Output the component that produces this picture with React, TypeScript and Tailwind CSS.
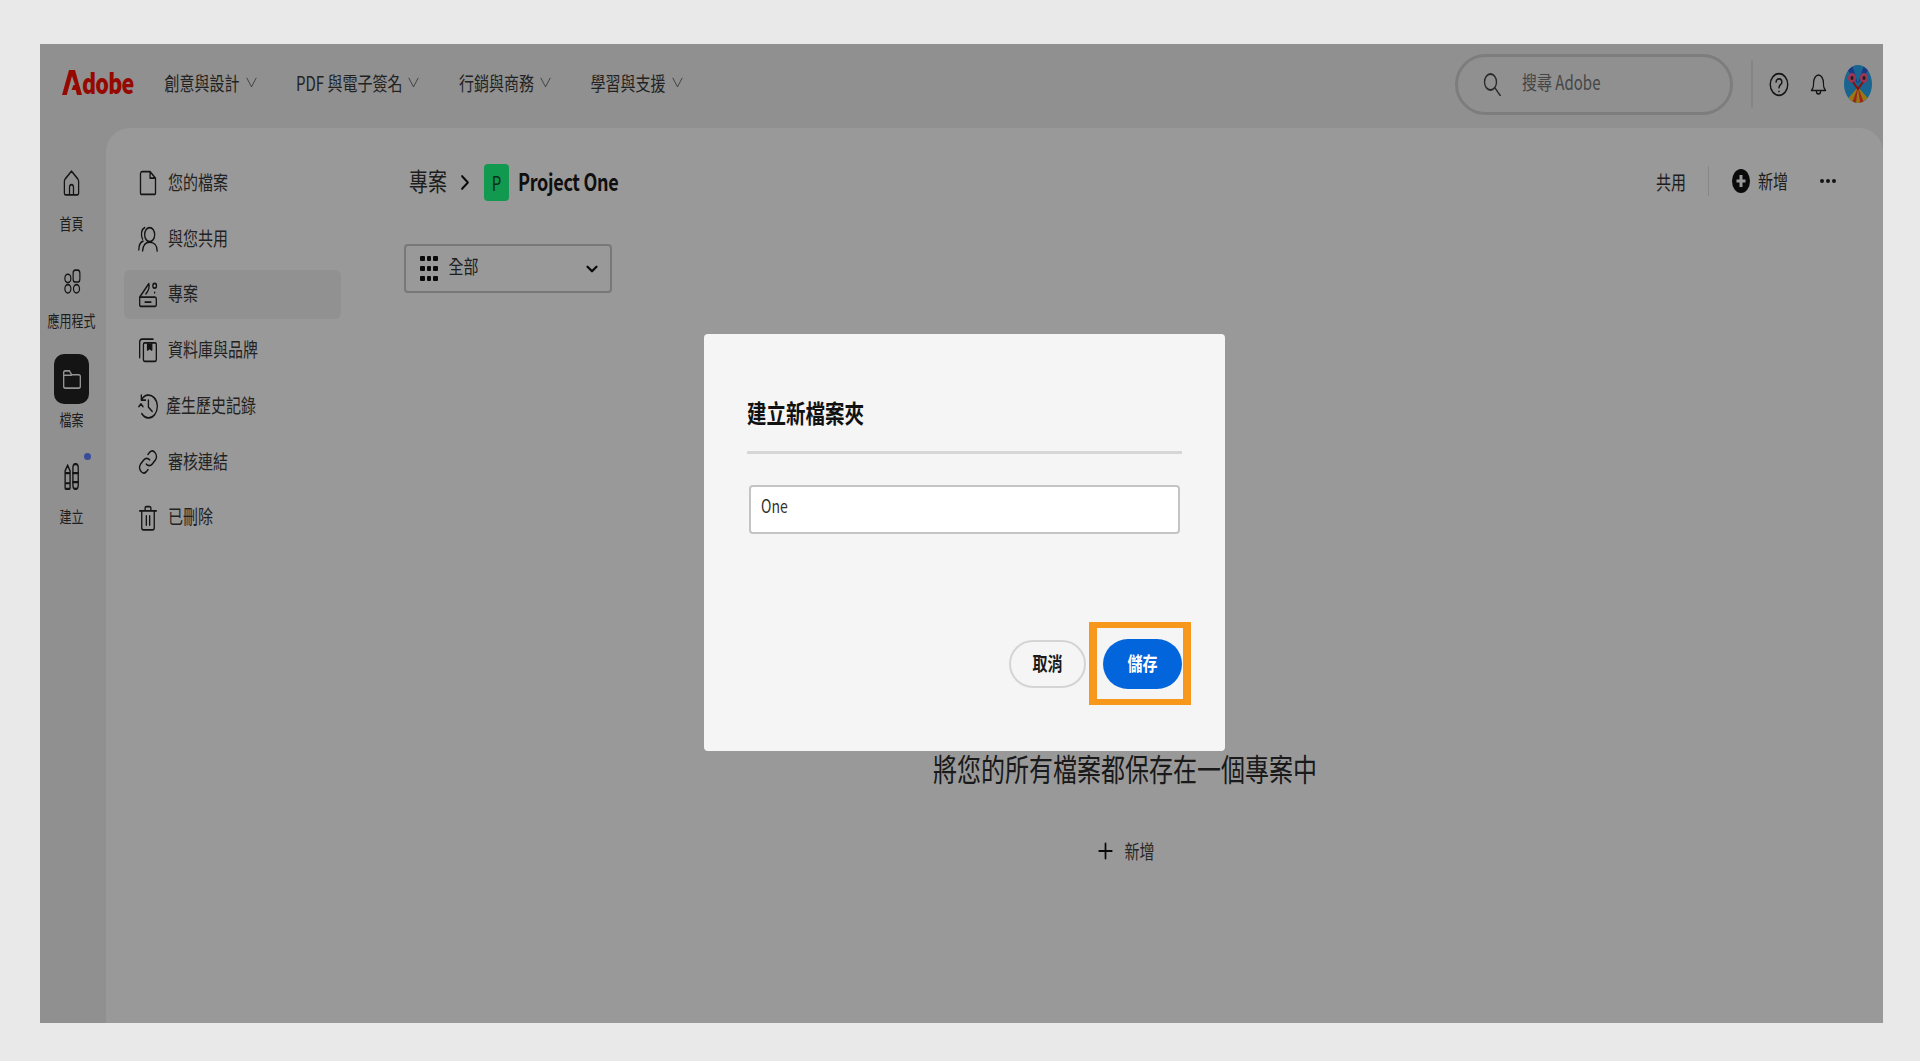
import { ChevronDown } from "lucide-react";
import type { ReactNode } from "react";

// the whole shot is stretched vertically, text and icons need the same stretch
function T({ children }: { children: ReactNode }) {
  return <span className="inline-block whitespace-nowrap leading-none scale-y-[1.3]">{children}</span>;
}

function Ico({ w, h, sw = 1.6, children }: { w: number; h: number; sw?: number; children: ReactNode }) {
  return (
    <svg
      width={w}
      height={h}
      viewBox="0 0 24 24"
      preserveAspectRatio="none"
      fill="none"
      stroke="currentColor"
      strokeWidth={sw}
      strokeLinecap="round"
      strokeLinejoin="round"
      className="shrink-0"
    >
      {children}
    </svg>
  );
}

const sideItems = [
  {
    label: "您的檔案",
    icon: <path d="M3 3.500A2 2 0 0 1 5 1.500h9.500L21 7.500V21.500a1 1 0 0 1-1 1H4a1 1 0 0 1-1-1z M14.500 1.500v6h6.500" />,
  },
  {
    label: "與您共用",
    icon: (
      <>
        <ellipse cx="14" cy="8" rx="6" ry="6.500" />
        <path d="M8 1.500C4 3 3 8 5.500 12 M1 22c0-4 2-7 5-8 M23 23c0-5-3.500-8-9-8s-8 3-8.500 8" />
      </>
    ),
  },
  {
    label: "專案",
    active: true,
    icon: (
      <>
        <path d="M2 14L13 1.500c1 3-1 7-3.500 9.500 M2 14h18a2 2 0 0 1 2 1.500V21a1.500 1.500 0 0 1-1.500 1.500H4A1.500 1.500 0 0 1 2 21z M8.500 18.500h7" />
        <circle cx="20" cy="3.500" r="2.200" />
        <path d="M20 9.500v.5" />
      </>
    ),
  },
  {
    label: "資料庫與品牌",
    icon: (
      <>
        <path d="M2 19V5a3 3 0 0 1 3-3h13" />
        <rect x="6.500" y="5.500" width="15.500" height="17" rx="1.500" />
        <path d="M11.500 6v6l2.500-1.500L16.500 12V6" fill="currentColor" />
      </>
    ),
  },
  {
    label: "產生歷史記錄",
    tight: true,
    icon: (
      <path d="M4 6.500A10.500 10.500 0 1 1 4.500 19 M4 2v4.500h5 M12.500 6.500v6.500l4.500 4 M1 12.500l2.500-2.500 2.500 2.500" />
    ),
  },
  {
    label: "審核連結",
    icon: (
      <path d="M10 14a5 5 0 0 0 7 0l4-4a5 5 0 0 0-7-7l-2 2 M14 10a5 5 0 0 0-7 0l-4 4a5 5 0 0 0 7 7l2-2" />
    ),
  },
  {
    label: "已刪除",
    icon: (
      <path d="M2 5.500h20 M8.500 5.500V3a1.500 1.500 0 0 1 1.500-1.500h4A1.500 1.500 0 0 1 15.500 3v2.500 M4.500 5.500V21a2 2 0 0 0 2 2h11a2 2 0 0 0 2-2V5.500 M10 10v8.500 M14 10v8.500" />
    ),
  },
];

const navItems = ["創意與設計", "PDF 與電子簽名", "行銷與商務", "學習與支援"];

function NavChevron() {
  return (
    <Ico w={11} h={13} sw={1.4}>
      <path d="M2 4l10 16L22 4" />
    </Ico>
  );
}

function Header() {
  return (
    <header className="flex h-[80px] items-center pl-[22px] pr-[11px] text-[15px] text-[#3a3a3a]">
      <div className="-mt-[3px] flex w-[71px] items-center text-[#fa0f00]">
        <svg width="20" height="25" viewBox="0 0 20 25" className="shrink-0">
          <path d="M7 0h6l7 25h-5l-1.300-5H9.500l2-5h1.600L10 6 4.800 25H0z" fill="currentColor" />
        </svg>
        <span className="text-[21.500px] font-black tracking-[-0.8px]">
          <T>dobe</T>
        </span>
      </div>
      <nav className="-mt-[3px] ml-[31.500px] flex items-center gap-[39.500px]">
        {navItems.map((item) => (
          <div key={item} className="flex items-center gap-[6px]">
            <T>{item}</T>
            <NavChevron />
          </div>
        ))}
      </nav>
      <div className="ml-auto flex h-[61px] w-[278px] items-center rounded-full border-[3px] border-[#d0d0d0] pl-[25px] text-[#757575]">
        <span className="text-[#444]">
          <Ico w={18} h={24} sw={1.8}>
            <circle cx="10" cy="10" r="8" />
            <path d="M16 16l7 7.500" />
          </Ico>
        </span>
        <span className="-mt-[4px] ml-[21px] text-[15px]">
          <T>搜尋 Adobe</T>
        </span>
      </div>
      <div className="ml-[18px] h-[48px] w-[2px] bg-[#dedede]" />
      <div className="ml-[16px] text-[#222]">
        <Ico w={20} h={25} sw={1.7}>
          <circle cx="12" cy="12" r="10.500" />
          <path d="M8.500 9.500a3.500 3 0 1 1 5.500 2.500c-1.200.8-2 1.400-2 3 M12 18.500v.2" />
        </Ico>
      </div>
      <div className="ml-[21px] text-[#222]">
        <Ico w={17} h={24} sw={1.7}>
          <path d="M2 18.500c2-2 3-3 3-7.500a7 8 0 0 1 14 0c0 4.500 1 5.500 3 7.500z M9 19a3 3 0 0 0 6 0" />
        </Ico>
      </div>
      <svg width="28" height="38" viewBox="0 0 28 38" className="ml-[17px] shrink-0">
        <defs>
          <clipPath id="av">
            <ellipse cx="14" cy="19" rx="14" ry="19" />
          </clipPath>
        </defs>
        <g clipPath="url(#av)">
          <rect width="28" height="38" fill="#27a8f0" />
          <path d="M14 19L0 0h8zM14 19L28 0h-8z" fill="#2a5fe0" />
          <path d="M14 22L0 38h28z" fill="#ffc81f" />
          <path d="M14 22L8 38h4zM14 22l6 16h-4z" fill="#ff4238" />
          <ellipse cx="8" cy="13" rx="4" ry="5" fill="#ff5a8a" />
          <ellipse cx="20" cy="13" rx="4" ry="5" fill="#ff5a8a" />
          <ellipse cx="8" cy="13" rx="1.500" ry="2" fill="#333" />
          <ellipse cx="20" cy="13" rx="1.500" ry="2" fill="#333" />
          <path d="M9 17l5 7 5-7" stroke="#e0201c" strokeWidth="2" fill="none" />
        </g>
      </svg>
    </header>
  );
}

function Rail() {
  return (
    <aside className="flex w-[66px] shrink-0 flex-col items-center pr-[3px] pt-[42px] text-[12px] text-[#333]">
      <div className="text-[#222]">
        <Ico w={19} h={26}>
          <path d="M4.500 23h15a1.500 1.500 0 0 0 1.500-1.500V10.500c0-1-.4-1.600-1-2.200L12 1 4 8.300c-.6.600-1 1.200-1 2.200v11A1.500 1.500 0 0 0 4.500 23z M9.500 23v-7a2.500 2.500 0 0 1 5 0v7" />
        </Ico>
      </div>
      <div className="mt-[19px] h-4">
        <T>首頁</T>
      </div>
      <div className="mt-[38px] text-[#222]">
        <Ico w={18} h={25}>
          <circle cx="6.500" cy="9" r="4" />
          <rect x="13.500" y="1" width="9" height="11.500" rx="3" />
          <circle cx="6.500" cy="19" r="4" />
          <circle cx="18" cy="19" r="4" />
        </Ico>
      </div>
      <div className="mt-[17px] h-4">
        <T>應用程式</T>
      </div>
      <div className="mt-[27px] flex h-[50px] w-[35px] items-center justify-center rounded-[10px] bg-[#222] text-[#f5f5f5]">
        <Ico w={20} h={23}>
          <path d="M2 5a2 2 0 0 1 2-2h5l2.500 4H20a2 2 0 0 1 2 2v10a2 2 0 0 1-2 2H4a2 2 0 0 1-2-2z M2 7.500h9.500" />
        </Ico>
      </div>
      <div className="mt-[6px] h-4">
        <T>檔案</T>
      </div>
      <div className="relative mt-[37px] text-[#222]">
        <Ico w={17} h={27} sw={1.9}>
          <path d="M3 7l3.500-5L10 7v15a1 1 0 0 1-1 1H4a1 1 0 0 1-1-1z M3 9h7 M3 18h7" />
          <rect x="14" y="1" width="7.500" height="22" rx="3" />
          <path d="M14 9h7.500 M14 17h7.500" />
        </Ico>
        <span className="absolute -right-[11px] -top-[10px] size-[7px] rounded-full bg-[#5d80ff]" />
      </div>
      <div className="mt-[17px] h-4">
        <T>建立</T>
      </div>
    </aside>
  );
}

function Sidebar() {
  return (
    <div className="flex w-[257px] shrink-0 flex-col gap-[6.75px] pl-[18px] pr-[22px] pt-[30.5px] text-[15px] text-[#3a3a3a]">
      {sideItems.map((item) => (
        <div
          key={item.label}
          className={`flex h-[49px] items-center rounded-[6px] pl-[14px] ${item.active ? "bg-[#f2f2f2]" : ""}`}
        >
          <div className="text-[#222]">
            <Ico w={20} h={26} sw={1.6}>
              {item.icon}
            </Ico>
          </div>
          <span className={`-mt-[2px] ${item.tight ? "ml-[8px]" : "ml-[10px]"}`}>
            <T>{item.label}</T>
          </span>
        </div>
      ))}
    </div>
  );
}

function Main() {
  return (
    <main className="flex min-w-0 flex-1 flex-col pl-[41px] pr-[47px] pt-[36px]">
      <div className="flex h-[37px] items-center">
        <span className="-mt-[5px] ml-[5px] text-[19px] text-[#333]">
          <T>專案</T>
        </span>
        <div className="ml-[13px] text-[#111]">
          <Ico w={10} h={15} sw={4}>
            <path d="M5 2l14 10L5 22" />
          </Ico>
        </div>
        <div className="ml-[14px] flex h-[37px] w-[25px] items-center justify-center rounded-[4px] bg-[#1bff84] text-[15px] text-[#0b4f29]">
          <T>P</T>
        </div>
        <span className="-mt-[3px] ml-[9px] text-[18px] font-semibold tracking-[-0.3px] text-[#1a1a1a]">
          <T>Project One</T>
        </span>
        <div className="-mt-[3px] ml-auto flex items-center text-[15px] text-[#333]">
          <T>共用</T>
          <div className="ml-[22px] h-[30px] w-[1px] bg-[#e2e2e2]" />
          <svg width="18" height="24" viewBox="0 0 18 24" className="ml-[23px]" preserveAspectRatio="none">
            <ellipse cx="9" cy="12" rx="9" ry="12" fill="#111" />
            <path d="M9 6v12M4.500 12h9" stroke="#fff" strokeWidth="3" />
          </svg>
          <span className="ml-[8px]">
            <T>新增</T>
          </span>
          <div className="ml-[32px] flex gap-[2px]">
            <span className="size-[4px] rounded-full bg-[#222]" />
            <span className="size-[4px] rounded-full bg-[#222]" />
            <span className="size-[4px] rounded-full bg-[#222]" />
          </div>
        </div>
      </div>

      <div className="mt-[43px] flex h-[49px] w-[208px] items-center rounded-[4px] border-2 border-[#c8c8c8] pl-[14px] pr-[9px] text-[15px] text-[#333]">
        <div className="grid grid-cols-3 gap-x-[2px] gap-y-[5px]">
          {Array.from({ length: 9 }).map((_, i) => (
            <span key={i} className="h-[5px] w-[4.500px] rounded-[1px] bg-[#111]" />
          ))}
        </div>
        <span className="-mt-[4px] ml-[11px]">
          <T>全部</T>
        </span>
        <ChevronDown size={18} strokeWidth={3} className="ml-auto text-[#111]" />
      </div>

      <div className="mt-[459px] pl-[10px] text-center text-[24px] leading-[32px] text-[#2c2c2c]">
        <T>將您的所有檔案都保存在一個專案中</T>
      </div>
      <div className="mt-[55px] flex h-6 items-center justify-center pl-[13px] text-[15px] text-[#444]">
        <div className="text-[#111]">
          <Ico w={15} h={18} sw={2.8}>
            <path d="M12 2v20M2 12h20" />
          </Ico>
        </div>
        <span className="ml-[11px]">
          <T>新增</T>
        </span>
      </div>
    </main>
  );
}

function Modal() {
  return (
    <div className="absolute left-[664px] top-[290px] flex h-[417px] w-[521px] flex-col rounded-[4px] bg-[#f5f5f5] px-[43px] pt-[65px]">
      <h2 className="h-[28px] text-[19.500px] font-bold leading-[28px] text-[#111]">
        <T>建立新檔案夾</T>
      </h2>
      <div className="mt-[24px] h-[3px] w-full bg-[#d6d6d6]" />
      <div className="mx-[2px] mt-[31px] flex h-[49px] items-center rounded-[4px] border-2 border-[#c4c4c4] bg-white pl-[10px] text-[14px] text-[#333]">
        <span className="-mt-[8px]">
          <T>One</T>
        </span>
      </div>
      <div className="mt-[105px] flex items-center justify-end gap-[17px]">
        <button className="flex h-[48px] w-[77px] items-center justify-center rounded-full border-2 border-[#d4d4d4] pb-[3px] text-[15px] font-bold text-[#1a1a1a]">
          <T>取消</T>
        </button>
        <button className="flex h-[50px] w-[79px] items-center justify-center rounded-full bg-[#0265dc] pb-[3px] text-[15px] font-bold text-white">
          <T>儲存</T>
        </button>
      </div>
      {/* highlight box from the tutorial */}
      <div className="absolute left-[385px] top-[288px] h-[83px] w-[102px] border-x-[8px] border-y-[6px] border-[#f7981d]" />
    </div>
  );
}

export default function App() {
  return (
    <div className="h-[1061px] w-full overflow-hidden bg-[#e9e9e9] pl-[40px] pt-[44px] font-['Noto_Sans_CJK_TC','Noto_Sans',sans-serif]">
      <div className="relative flex h-[979px] w-[1843px] flex-col overflow-hidden bg-[#f0f0f0]">
        <Header />
        <div className="mt-[4px] flex min-h-0 flex-1">
          <Rail />
          <div className="flex min-w-0 flex-1 rounded-t-[24px] bg-white">
            <Sidebar />
            <Main />
          </div>
        </div>
        <div className="absolute inset-0 bg-black/40" />
        <Modal />
      </div>
    </div>
  );
}
